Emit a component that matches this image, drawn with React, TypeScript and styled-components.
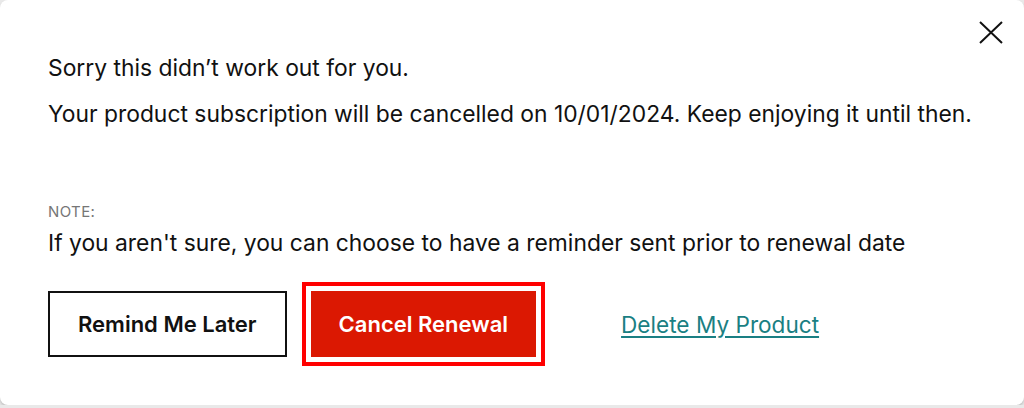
import React from "react";
import styled, { createGlobalStyle } from "styled-components";

const Global = createGlobalStyle`
  html, body { margin: 0; padding: 0; background: #e9e9e9; }
  body { font-family: "Inter", "Noto Sans", sans-serif; color: #111; }
`;

const Modal = styled.div`
  position: relative;
  box-sizing: border-box;
  width: 1024px;
  height: 405px;
  background: #fff;
  border-radius: 8px;
  box-shadow: 0 2px 3px rgba(0, 0, 0, 0.18);
  padding: 54px 48px 0 48px;
  display: flex;
  flex-direction: column;
`;

const Close = styled.button`
  position: absolute;
  top: 21px;
  right: 21px;
  width: 24px;
  height: 23px;
  padding: 0;
  border: none;
  background: none;
  cursor: pointer;
  display: flex;
`;

const Para = styled.p<{ $mt?: number }>`
  margin: ${(p) => p.$mt ?? 0}px 0 0 0;
  font-size: 22.85px;
  line-height: 28px;
  color: #111;
  white-space: nowrap;
`;

const NoteLabel = styled.div`
  margin-top: 75px;
  font-size: 15px;
  line-height: 18px;
  color: #767676;
  letter-spacing: 0.4px;
`;

const Actions = styled.div`
  margin-top: 34px;
  display: flex;
  align-items: center;
  gap: 24px;
`;

const Button = styled.button<{ $primary?: boolean; $focused?: boolean }>`
  box-sizing: border-box;
  height: 66px;
  padding: 0 ${(p) => (p.$primary ? 26 : 28)}px;
  font-family: "Inter", "Noto Sans", sans-serif;
  font-size: 22px;
  font-weight: 600;
  border: 2px solid ${(p) => (p.$primary ? "#db1802" : "#111")};
  background: ${(p) => (p.$primary ? "#db1802" : "#fff")};
  color: ${(p) => (p.$primary ? "#fff" : "#111")};
  outline: ${(p) => (p.$focused ? "4px solid #ff0000" : "none")};
  outline-offset: 5px;
  cursor: pointer;
`;

const LinkButton = styled.a`
  margin-left: 61px;
  font-size: 22.6px;
  color: #1a7f83;
  text-decoration: underline;
  text-underline-offset: 3px;
  text-decoration-thickness: 1.5px;
  cursor: pointer;
`;

export default function App() {
  return (
    <>
      <Global />
      <Modal>
        <Close aria-label="Close">
          <svg width="24" height="23" viewBox="0 0 24 23">
            <path d="M1 1 L23 22 M23 1 L1 22" stroke="#111" strokeWidth="2" fill="none" />
          </svg>
        </Close>
        <Para>Sorry this didn’t work out for you.</Para>
        <Para $mt={18}>
          Your product subscription will be cancelled on 10/01/2024. Keep enjoying it until then.
        </Para>
        <NoteLabel>NOTE:</NoteLabel>
        <Para $mt={8}>
          If you aren't sure, you can choose to have a reminder sent prior to renewal date
        </Para>
        <Actions>
          <Button>Remind Me Later</Button>
          <Button $primary $focused>Cancel Renewal</Button>
          <LinkButton>Delete My Product</LinkButton>
        </Actions>
      </Modal>
    </>
  );
}
